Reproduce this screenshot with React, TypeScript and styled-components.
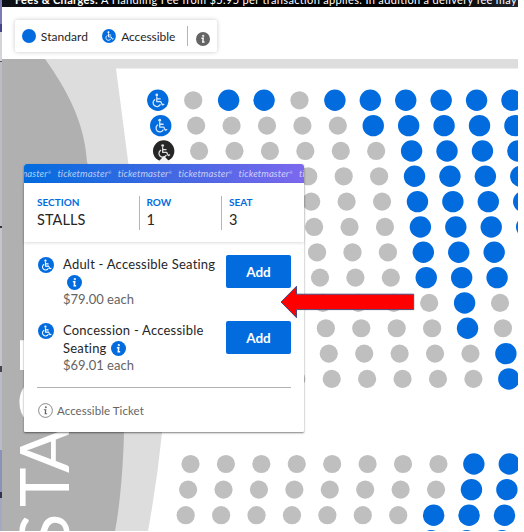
import React from 'react';
import styled, { createGlobalStyle } from 'styled-components';

const BLUE = '#026cdf';
const GREY = '#bfbfbf';

const GlobalStyle = createGlobalStyle`
  * { box-sizing: border-box; }
  body { margin: 0; background: #fff; overflow: hidden; font-family: Lato, "Open Sans", sans-serif; color: #262626; }
  svg { display: block; }
`;

const Page = styled.div`
  display: grid;
  grid-template-columns: 2px 516px;
  height: 531px;
  overflow: hidden;
`;

const Rail = styled.div`
  background: linear-gradient(#7c7cb4 0 24px, #44448a 24px 32px, #d4d4d8 32px 61px, #55555c 61px 62px,
    #bcbcc4 62px 226px, #33333d 226px 228px, #c4c4ca 228px 366px, #44444c 366px 372px, #b9bcc8 372px 450px,
    #8b92b8 450px 492px, #33334d 492px 498px, #a3a8c4 498px);
`;

const Main = styled.main`
  display: flex;
  flex-direction: column;
  min-width: 0;
`;

const Banner = styled.div`
  height: 7px;
  display: flex;
  align-items: flex-end;
  overflow: hidden;
  padding: 0 0 1px 13px;
  background: linear-gradient(90deg, #0d1118, #000 30%, #000 85%, #20242b);
  color: #fff;
  font-size: 11px;
  line-height: 12px;
  letter-spacing: 0.34px;
  white-space: pre;
`;

const Toolbar = styled.div`
  height: 52px;
  padding: 13px;
  background: #fff;
`;

const Legend = styled.div`
  width: 202px;
  height: 32px;
  display: flex;
  align-items: center;
  padding: 0 7px;
  background: #fff;
  border-radius: 2px;
  box-shadow: 0 0 4px rgba(0, 0, 0, 0.22);
  font-size: 12px;
`;

const LegendLabel = styled.span<{ $width: number; $spacing: number }>`
  width: ${p => p.$width}px;
  margin-left: 5px;
  padding-top: 1px;
  letter-spacing: ${p => p.$spacing}px;
  line-height: 16px;
  white-space: nowrap;
`;

const Dot = styled.i`
  width: 14px;
  height: 14px;
  border-radius: 50%;
  background: ${BLUE};
`;

const LegendRule = styled.i`
  width: 1px;
  height: 20px;
  background: #b5b5b5;
  margin-right: 8px;
`;

const LegendInfo = styled.span`
  padding-top: 5px;
`;

const MapArea = styled.section`
  position: relative;
  height: 472px;
  overflow: hidden;
`;

const StageText = styled.text`
  font: 400 67px Lato, sans-serif;
  fill: #fff;
`;

const Popup = styled.article`
  position: absolute;
  left: 22px;
  top: 105px;
  width: 280px;
  height: 268px;
  background: #fff;
  border-radius: 3px 3px 1px 1px;
  box-shadow: 0 1px 2px rgba(0, 0, 0, 0.5);
`;

const Caret = styled.i`
  position: absolute;
  left: 132px;
  top: -8px;
  border: 8px solid transparent;
  border-top: 0;
  border-bottom-color: #f4f4f4;
`;

const Ribbon = styled.div`
  height: 19px;
  display: flex;
  align-items: center;
  overflow: hidden;
  border-radius: 3px 3px 0 0;
  background: linear-gradient(90deg, ${BLUE}, #3f68e2 50%, #7c68ee);
`;

const Brand = styled.span`
  flex: 0 0 60.4px;
  position: relative;
  left: -27px;
  color: rgba(255, 255, 255, 0.68);
  font-size: 9.6px;
  font-style: italic;
  line-height: 18px;
  letter-spacing: 0.08px;
  white-space: nowrap;
`;

const Reg = styled.small`
  font-size: 4px;
  vertical-align: 3px;
`;

const SeatInfo = styled.dl`
  height: 59px;
  margin: 0;
  padding: 13px;
  display: grid;
  grid-template-columns: 101.5px 82.5px 1fr;
  box-shadow: 0 1px 3px rgba(0, 0, 0, 0.14);
`;

const InfoCell = styled.div<{ $divided?: boolean }>`
  height: 34px;
  border-left: ${p => (p.$divided ? '1px solid #b5b5b5' : '0')};
  padding-left: ${p => (p.$divided ? 7 : 0)}px;
`;

const InfoTerm = styled.dt`
  color: ${BLUE};
  font-size: 10px;
  font-weight: 700;
  line-height: 13px;
`;

const InfoValue = styled.dd`
  margin: 2px 0 0;
  font-size: 14.5px;
  line-height: 17px;
  letter-spacing: 0.1px;
`;

const Offers = styled.div`
  height: 146px;
  margin: 0 13px;
  padding-top: 13px;
  border-bottom: 1px solid #b1b1b1;
`;

const Offer = styled.div<{ $height: number }>`
  height: ${p => p.$height}px;
  display: grid;
  grid-template-columns: 26px 1fr 65px;
  align-items: start;
`;

const OfferIcon = styled.span`
  padding: 2px 0 0 1px;
`;

const OfferName = styled.div<{ $spacing: number }>`
  font-size: 13px;
  line-height: 18px;
  letter-spacing: ${p => p.$spacing}px;
  white-space: nowrap;
`;

const InlineInfo = styled.span<{ $indent: number }>`
  display: inline-block;
  vertical-align: -3px;
  margin-left: ${p => p.$indent}px;
`;

const Price = styled.div`
  color: #646464;
  font-size: 13px;
  line-height: 17px;
  height: 18px;
`;

const AddButton = styled.button`
  height: 33px;
  border: 0;
  border-radius: 2px;
  background: ${BLUE};
  color: #fff;
  font: 700 13.5px Lato, sans-serif;
  padding: 1px 0 0;
`;

const Note = styled.footer`
  height: 43px;
  display: flex;
  align-items: center;
  gap: 4px;
  padding: 1px 0 0 14px;
  color: #646464;
  font-size: 11.5px;
  letter-spacing: 0.07px;
`;

const Arrow = styled.svg`
  position: absolute;
  left: 278px;
  top: 225px;
`;

function WheelchairShape() {
  return (
    <g fill="none" stroke="#fff" strokeLinecap="round" strokeLinejoin="round" strokeWidth="1.3">
      <circle cx="9.3" cy="4.6" r="1.4" fill="#fff" stroke="none" />
      <path d="M9.3 6.6v4.8h4l1.6 3.2 1.4-.6M9.5 8.6h3.2M7.2 9.4a3.8 3.8 0 1 0 5.5 5" />
    </g>
  );
}

function AccessibleIcon({ size }: { size: number }) {
  return (
    <svg width={size} height={size} viewBox="0 0 20 20">
      <circle cx="10" cy="10" r="10" fill={BLUE} />
      <WheelchairShape />
    </svg>
  );
}

function InfoIcon({ size, fill, outline }: { size: number; fill: string; outline?: boolean }) {
  return (
    <svg width={size} height={size} viewBox="0 0 20 20">
      <circle cx="10" cy="10" r={outline ? 9.2 : 10} fill={outline ? '#fff' : fill} stroke={outline ? fill : 'none'} />
      <g fill="none" stroke={outline ? fill : '#fff'} strokeWidth={outline ? 1.6 : 2}>
        <circle cx="10.4" cy="5.6" r=".5" />
        <path d="M7.8 9h2.5l-.6 5.3h2.5" />
      </g>
    </svg>
  );
}

// One character per seat: a = accessible, x = selected, g = taken, b = available.
const upperRows = [
  'agbbgbbbbbb', 'agggggbbbbb', 'xggggggbbbb', 'gggggggbbbb', 'gggggggbbbb', 'gggggggbbbb',
  'gggggggbbb', 'gggggggbbb', 'ggggggggbg', 'ggggggggbg', 'gggggggggb', 'gggggggggb',
];
const lowerRows = ['ggggggggbb', 'ggggggggbb', 'gggggggbbb', 'gggggggbbb'];

function SeatRows({ rows, x, y, dx, dy }: { rows: string[]; x: number; y: number; dx: number; dy: number }) {
  return (
    <>
      {rows.map((row, r) =>
        row.split('').map((kind, c) => {
          const cx = x + r * dx + c * 35.42;
          const cy = y + r * dy;
          const wheelchair = kind === 'a' || kind === 'x';
          return (
            <g key={`${r}-${c}`} transform={`translate(${cx} ${cy})`}>
              <circle r={kind === 'g' ? 9.1 : 10.7} fill={kind === 'g' ? GREY : kind === 'x' ? '#262626' : BLUE} />
              {wheelchair && <g transform="translate(-10.3 -10)" opacity=".85"><WheelchairShape /></g>}
            </g>
          );
        }),
      )}
    </>
  );
}

function SeatMap() {
  return (
    <svg width="516" height="472" viewBox="2 59 516 472">
      <rect x="2" y="59" width="516" height="472" fill="#ddd" />
      <path d="M116 68.5H518V531H148Q157 482 162 433L150 330Z" fill="#fff" />
      <path d="M2 59H45C68 91 85 124 87 162C112 230 125 340 124 433C123 470 120 505 115 531H2Z" fill="#b0b0b0" />
      <StageText transform="translate(68.8 550) rotate(-90)" x="0 43 77 120 174">STAGE</StageText>
      <SeatRows rows={upperRows} x={157.8} y={100.3} dx={2.93} dy={25.33} />
      <SeatRows rows={lowerRows} x={190.5} y={464} dx={-2.4} dy={25.6} />
    </svg>
  );
}

export default function App() {
  return (
    <Page>
      <GlobalStyle />
      <Rail />
      <Main>
        <Banner><b>Fees &amp; Charges: </b>A Handling Fee from $5.95 per transaction applies. In addition a delivery fee may</Banner>
        <Toolbar>
          <Legend>
            <Dot />
            <LegendLabel $width={62} $spacing={0.05}>Standard</LegendLabel>
            <AccessibleIcon size={14} />
            <LegendLabel $width={66.5} $spacing={-0.05}>Accessible</LegendLabel>
            <LegendRule />
            <LegendInfo><InfoIcon size={14} fill="#646464" /></LegendInfo>
          </Legend>
        </Toolbar>
        <MapArea>
          <SeatMap />
          <Popup>
            <Caret />
            <Ribbon>
              {[0, 1, 2, 3, 4, 5].map(i => <Brand key={i}>ticketmaster<Reg>®</Reg></Brand>)}
            </Ribbon>
            <SeatInfo>
              <InfoCell><InfoTerm>SECTION</InfoTerm><InfoValue>STALLS</InfoValue></InfoCell>
              <InfoCell $divided><InfoTerm>ROW</InfoTerm><InfoValue>1</InfoValue></InfoCell>
              <InfoCell $divided><InfoTerm>SEAT</InfoTerm><InfoValue>3</InfoValue></InfoCell>
            </SeatInfo>
            <Offers>
              <Offer $height={66}>
                <OfferIcon><AccessibleIcon size={16} /></OfferIcon>
                <div>
                  <OfferName $spacing={0.22}>Adult - Accessible Seating<br /><InlineInfo $indent={3.5}><InfoIcon size={15} fill={BLUE} /></InlineInfo></OfferName>
                  <Price>$79.00 each</Price>
                </div>
                <AddButton>Add</AddButton>
              </Offer>
              <Offer $height={56}>
                <OfferIcon><AccessibleIcon size={16} /></OfferIcon>
                <div>
                  <OfferName $spacing={0.22}>Concession - Accessible<br />Seating<InlineInfo $indent={4.5}><InfoIcon size={15} fill={BLUE} /></InlineInfo></OfferName>
                  <Price>$69.01 each</Price>
                </div>
                <AddButton>Add</AddButton>
              </Offer>
            </Offers>
            <Note><InfoIcon size={15} fill="#646464" outline />Accessible Ticket</Note>
          </Popup>
          <Arrow width="136" height="36" viewBox="280 284 136 36">
            <path d="M281 302L296.5 286.3V294.2H413.7V309.6H296.5V317.7Z" fill="#fe0000" stroke="#4b4a7b" strokeWidth="1" />
          </Arrow>
        </MapArea>
      </Main>
    </Page>
  );
}
